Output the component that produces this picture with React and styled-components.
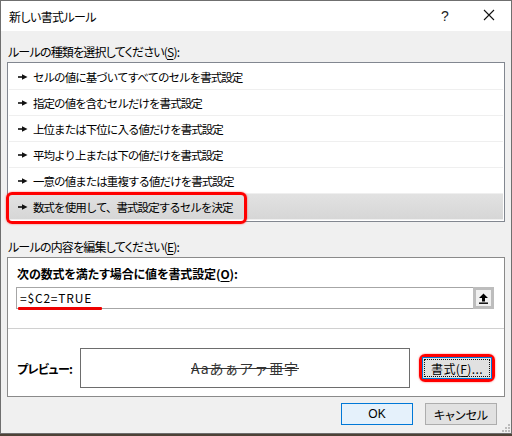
import styled, { createGlobalStyle } from "styled-components";

const GlobalStyle = createGlobalStyle`
    html, body {
        margin: 0;
        padding: 0;
        background: #4d4236;
    }
    * {
        box-sizing: border-box;
    }
`;

const Window = styled.div`
    position: relative;
    width: 512px;
    height: 434px;
    border: 1px solid #6f6f6f;
    background: #f0f0f0;
    display: flex;
    flex-direction: column;
    font-family: "Noto Sans CJK JP", "Noto Sans", sans-serif;
    font-size: 12px;
    font-feature-settings: "palt";
    color: #000;
`;

const TitleBar = styled.div`
    height: 30px;
    background: #fff;
    display: flex;
    align-items: center;
    padding-left: 8px;
    flex-shrink: 0;
`;

const Title = styled.span`
    flex: 1;
    font-size: 12px;
    letter-spacing: -0.6px;
`;

const TitleButton = styled.span`
    width: 44px;
    text-align: center;
    font-family: "Liberation Sans", sans-serif;
    font-size: 14px;
    color: #222;
`;

const Body = styled.div`
    flex: 1;
    display: flex;
    flex-direction: column;
    padding: 12px 6px 0 6px;
`;

const Label = styled.div`
    height: 18px;
    line-height: 18px;
    padding-left: 1px;
    margin-top: ${(p) => p.$top || 0}px;
    margin-bottom: 1px;
    letter-spacing: -0.8px;
`;

const Mnemonic = styled.span`
    text-decoration: underline;
    text-underline-offset: 2px;
`;

const ListBox = styled.div`
    position: relative;
    height: 160px;
    border: 1px solid #828790;
    background: #fff;
    padding: 1px 1px 0 1px;
`;

const Row = styled.div`
    height: 26px;
    display: flex;
    align-items: center;
    gap: 5px;
    padding-left: 9px;
    border-bottom: 1px solid #efefef;
    background: ${(p) => (p.$selected ? "linear-gradient(#e2e2e2, #d6d6d6)" : "#fff")};
    font-size: 11.5px;
    font-feature-settings: normal;
    letter-spacing: -0.95px;
`;

const Highlight = styled.div`
    position: absolute;
    left: -2px;
    top: 129px;
    width: 241px;
    height: 32px;
    border: 3px solid #ff0000;
    border-radius: 6px;
    box-shadow: 0 0 2px rgba(255, 0, 0, 0.6);
    pointer-events: none;
`;

const Group = styled.div`
    height: 140px;
    border: 1px solid #8a8a8a;
    background: #fff;
    display: flex;
    flex-direction: column;
`;

const BoldLabel = styled.div`
    font-weight: 700;
    height: 18px;
    line-height: 18px;
    margin: 7px 0 4px 9px;
    letter-spacing: -0.1px;
`;

const InputRow = styled.div`
    position: relative;
    display: flex;
    height: 22px;
    margin: 0 10px 0 8px;
    border: 1px solid #a6a6a6;
    background: #fff;
`;

const InputText = styled.div`
    flex: 1;
    line-height: 20px;
    padding-left: 3px;
    font-size: 12px;
    letter-spacing: 0.8px;
`;

const CollapseButton = styled.div`
    width: 21px;
    height: 22px;
    margin: -1px -1px -1px 0;
    border: 3px solid #bdbdbd;
    background: #f0f0f0;
    display: flex;
    align-items: center;
    justify-content: center;
`;

const RedUnderline = styled.div`
    position: absolute;
    left: 1px;
    bottom: -2px;
    width: 84px;
    height: 3px;
    background: #ee0000;
    border-radius: 1px;
`;

const Separator = styled.div`
    height: 1px;
    background: #d0d0d0;
    margin-top: 19px;
`;

const PreviewRow = styled.div`
    display: flex;
    align-items: center;
    margin: 19px 0 0 9px;
`;

const PreviewLabel = styled.span`
    width: 63px;
    font-weight: 700;
    letter-spacing: -0.6px;
`;

const PreviewBox = styled.div`
    width: 330px;
    height: 40px;
    border: 1px solid #6d6d6d;
    display: flex;
    align-items: center;
    justify-content: center;
`;

const PreviewText = styled.span`
    font-size: 14px;
    font-feature-settings: normal;
    text-decoration: line-through;
    color: #333;
    letter-spacing: 0.9px;
`;

const FormatWrap = styled.div`
    margin-left: 9px;
    border: 3px solid #ff0000;
    border-radius: 6px;
    box-shadow: 0 0 2px rgba(255, 0, 0, 0.6);
    width: 76px;
    height: 28px;
    display: flex;
`;

const FormatButton = styled.div`
    flex: 1;
    border: 1px solid #0078d7;
    background: #e1e1e1;
    display: flex;
    align-items: center;
    justify-content: center;
    outline: 1px dotted #111;
    outline-offset: -3px;
    letter-spacing: 0.4px;
`;

const Footer = styled.div`
    display: flex;
    justify-content: flex-end;
    gap: 12px;
    padding: 6px 8px 0 0;
`;

const DialogButton = styled.div`
    width: 72px;
    height: 22px;
    display: flex;
    align-items: center;
    justify-content: center;
    border: 1px solid ${(p) => (p.$primary ? "#0078d7" : "#adadad")};
    background: ${(p) => (p.$primary ? "#e5f1fb" : "#e1e1e1")};
    font-family: ${(p) => (p.$primary ? '"Liberation Sans", sans-serif' : "inherit")};
    font-size: 12px;
`;

const Grip = styled.svg`
    position: absolute;
    right: 1px;
    bottom: 1px;
`;

function Pointer() {
    return (
        <svg width="10" height="8" viewBox="0 0 10 8">
            <path d="M0 4h5" stroke="#111" strokeWidth="1.6" />
            <path d="M4 1.2L9.5 4L4 6.8z" fill="#111" />
        </svg>
    );
}

const rules = [
    "セルの値に基づいてすべてのセルを書式設定",
    "指定の値を含むセルだけを書式設定",
    "上位または下位に入る値だけを書式設定",
    "平均より上または下の値だけを書式設定",
    "一意の値または重複する値だけを書式設定",
    "数式を使用して、書式設定するセルを決定",
];

export default function App() {
    return (
        <>
            <GlobalStyle />
            <Window>
                <TitleBar>
                    <Title>新しい書式ルール</Title>
                    <TitleButton>?</TitleButton>
                    <TitleButton>
                        <svg width="12" height="12" viewBox="0 0 12 12">
                            <path d="M1 1L11 11M11 1L1 11" stroke="#111" strokeWidth="1.1" />
                        </svg>
                    </TitleButton>
                </TitleBar>
                <Body>
                    <Label>
                        ルールの種類を選択してください(<Mnemonic>S</Mnemonic>):
                    </Label>
                    <ListBox>
                        {rules.map((r, i) => (
                            <Row key={r} $selected={i === rules.length - 1}>
                                <Pointer />
                                <span>{r}</span>
                            </Row>
                        ))}
                        <Highlight />
                    </ListBox>
                    <Label $top={16}>
                        ルールの内容を編集してください(<Mnemonic>E</Mnemonic>):
                    </Label>
                    <Group>
                        <BoldLabel>
                            次の数式を満たす場合に値を書式設定(<Mnemonic>O</Mnemonic>):
                        </BoldLabel>
                        <InputRow>
                            <InputText>=$C2=TRUE</InputText>
                            <CollapseButton>
                                <svg width="11" height="11" viewBox="0 0 11 11">
                                    <path d="M5.5 0.5L10 5H7v3.5H4V5H1z" fill="#000" />
                                    <path d="M1 10.2h9" stroke="#000" strokeWidth="1.4" />
                                </svg>
                            </CollapseButton>
                            <RedUnderline />
                        </InputRow>
                        <Separator />
                        <PreviewRow>
                            <PreviewLabel>プレビュー:</PreviewLabel>
                            <PreviewBox>
                                <PreviewText>Aaあぁアァ亜宇</PreviewText>
                            </PreviewBox>
                            <FormatWrap>
                                <FormatButton>
                                    書式(<Mnemonic>F</Mnemonic>)...
                                </FormatButton>
                            </FormatWrap>
                        </PreviewRow>
                    </Group>
                    <Footer>
                        <DialogButton $primary>OK</DialogButton>
                        <DialogButton>キャンセル</DialogButton>
                    </Footer>
                </Body>
                <Grip width="8" height="8" viewBox="0 0 8 8">
                    <rect x="6" y="0" width="2" height="2" fill="#bcbcbc" />
                    <rect x="3" y="3" width="2" height="2" fill="#bcbcbc" />
                    <rect x="6" y="3" width="2" height="2" fill="#bcbcbc" />
                    <rect x="0" y="6" width="2" height="2" fill="#bcbcbc" />
                    <rect x="3" y="6" width="2" height="2" fill="#bcbcbc" />
                    <rect x="6" y="6" width="2" height="2" fill="#bcbcbc" />
                </Grip>
            </Window>
        </>
    );
}
